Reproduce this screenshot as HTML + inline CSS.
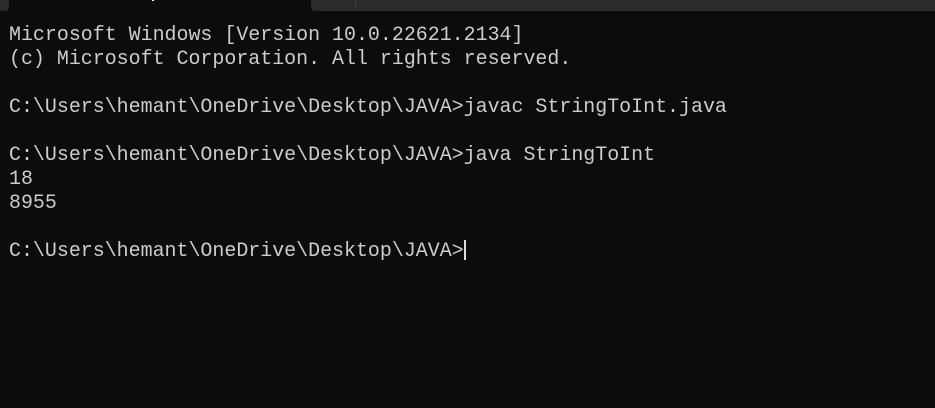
<!DOCTYPE html><html><head><style>
body{margin:0;width:935px;height:408px;background:#0c0c0c;overflow:hidden;position:relative}
.g{position:absolute;background:#2c2c2c}
pre{position:absolute;left:9px;top:23px;margin:0;font-family:"Liberation Mono",monospace;font-size:19.95px;line-height:24px;color:#cccccc;letter-spacing:0}
.c{display:inline-block;width:2px;height:20px;background:#ddd;vertical-align:-4px}
</style></head><body>
<div class="g" style="left:0;top:0;width:9px;height:11px;border-bottom-right-radius:4px"></div>
<div class="g" style="left:311px;top:0;width:624px;height:11px;border-bottom-left-radius:4px"></div>
<div style="position:absolute;left:355px;top:0;width:1px;height:7px;background:#444"></div>
<div style="position:absolute;left:152px;top:0;width:2px;height:1px;background:#fff"></div>
<pre>Microsoft Windows [Version 10.0.22621.2134]
(c) Microsoft Corporation. All rights reserved.

C:\Users\hemant\OneDrive\Desktop\JAVA&gt;javac StringToInt.java

C:\Users\hemant\OneDrive\Desktop\JAVA&gt;java StringToInt
18
8955

C:\Users\hemant\OneDrive\Desktop\JAVA&gt;<span class="c"></span></pre>
</body></html>
